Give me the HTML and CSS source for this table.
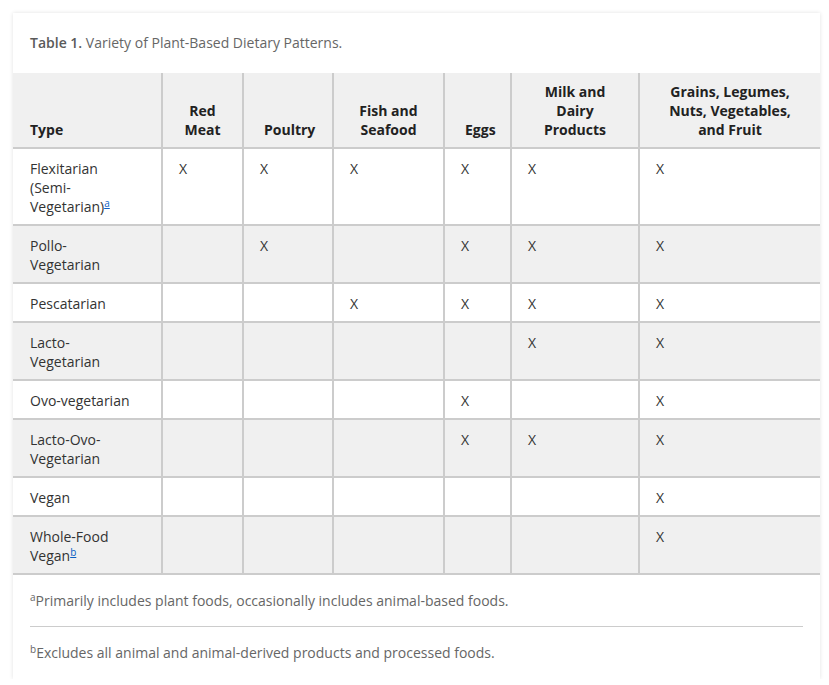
FILE: index.html
```html
<!DOCTYPE html>
<html lang="en">
<head>
<meta charset="utf-8">
<title>Table 1</title>
<link rel="stylesheet" href="styles.css">
</head>
<body>
<div class="card">
  <div class="caption"><span class="label">Table 1.</span> Variety of Plant-Based Dietary Patterns.</div>
  <table class="grid">
    <colgroup>
      <col class="c1"><col class="c2"><col class="c3"><col class="c4"><col class="c5"><col class="c6"><col class="c7">
    </colgroup>
    <thead>
      <tr>
        <th class="left">Type</th>
        <th>Red Meat</th>
        <th>Poultry</th>
        <th>Fish and Seafood</th>
        <th>Eggs</th>
        <th>Milk and Dairy Products</th>
        <th>Grains, Legumes, Nuts, Vegetables, and Fruit</th>
      </tr>
    </thead>
    <tbody>
      <tr>
        <td>Flexitarian (Semi-Vegetarian)<sup><a href="#fa">a</a></sup></td>
        <td>X</td><td>X</td><td>X</td><td>X</td><td>X</td><td>X</td>
      </tr>
      <tr class="alt">
        <td>Pollo-Vegetarian</td>
        <td></td><td>X</td><td></td><td>X</td><td>X</td><td>X</td>
      </tr>
      <tr>
        <td>Pescatarian</td>
        <td></td><td></td><td>X</td><td>X</td><td>X</td><td>X</td>
      </tr>
      <tr class="alt">
        <td>Lacto-Vegetarian</td>
        <td></td><td></td><td></td><td></td><td>X</td><td>X</td>
      </tr>
      <tr>
        <td>Ovo-vegetarian</td>
        <td></td><td></td><td></td><td>X</td><td></td><td>X</td>
      </tr>
      <tr class="alt">
        <td>Lacto-Ovo-Vegetarian</td>
        <td></td><td></td><td></td><td>X</td><td>X</td><td>X</td>
      </tr>
      <tr>
        <td>Vegan</td>
        <td></td><td></td><td></td><td></td><td></td><td>X</td>
      </tr>
      <tr class="alt">
        <td>Whole-Food Vegan<sup><a href="#fb">b</a></sup></td>
        <td></td><td></td><td></td><td></td><td></td><td>X</td>
      </tr>
    </tbody>
  </table>
  <div class="notes">
    <p class="note" id="fa"><sup>a</sup>Primarily includes plant foods, occasionally includes animal-based foods.</p>
    <p class="note" id="fb"><sup>b</sup>Excludes all animal and animal-derived products and processed foods.</p>
  </div>
</div>
</body>
</html>
```
FILE: styles.css
```css
html, body {
  margin: 0;
  padding: 0;
  background: #ffffff;
}
body {
  font-family: "Open Sans", "Liberation Sans", sans-serif;
  font-size: 14px;
  line-height: 19px;
  color: #333333;
  padding: 13px 9px 0 13px;
}
.card {
  width: 807px;
  background: #ffffff;
  box-shadow: 0 0 4px rgba(0, 0, 0, 0.12);
}
.caption {
  padding: 20px 17px 21px;
  font-size: 14px;
  line-height: 19px;
  color: #666666;
}
.caption .label {
  font-weight: 600;
  color: #5a5a5a;
}
.grid {
  width: 807px;
  border-collapse: collapse;
  table-layout: fixed;
}
.c1 { width: 149px; }
.c2 { width: 81px; }
.c3 { width: 90px; }
.c4 { width: 111px; }
.c5 { width: 67px; }
.c6 { width: 128px; }
.c7 { width: 181px; }
.grid th,
.grid td {
  border-left: 2px solid #cccccc;
  border-bottom: 2px solid #cccccc;
  padding: 10px 16px 8px;
  text-align: left;
  vertical-align: top;
}
.grid th:first-child,
.grid td:first-child {
  border-left: none;
  padding-left: 17px;
  padding-right: 30px;
}
.grid thead th {
  background: #f0f0f0;
  font-weight: 700;
  color: #222222;
  text-align: center;
  vertical-align: bottom;
  padding: 9px 20px 8px;
}
.grid thead th.left {
  text-align: left;
  padding-left: 17px;
}
.grid tr.alt td {
  background: #f0f0f0;
}
.grid sup {
  font-size: 10px;
  line-height: 0;
  vertical-align: 5px;
}
.grid sup a {
  color: #0a5fc4;
  text-decoration: underline;
}
.notes {
  padding: 0 17px;
}
.note {
  margin: 0;
  padding: 16px 0 16px;
  color: #666666;
  font-size: 14px;
  line-height: 19px;
}
.note + .note {
  border-top: 1px solid #cccccc;
  padding-bottom: 17px;
}
.note sup {
  font-size: 10px;
  line-height: 0;
  vertical-align: 5px;
}
```
